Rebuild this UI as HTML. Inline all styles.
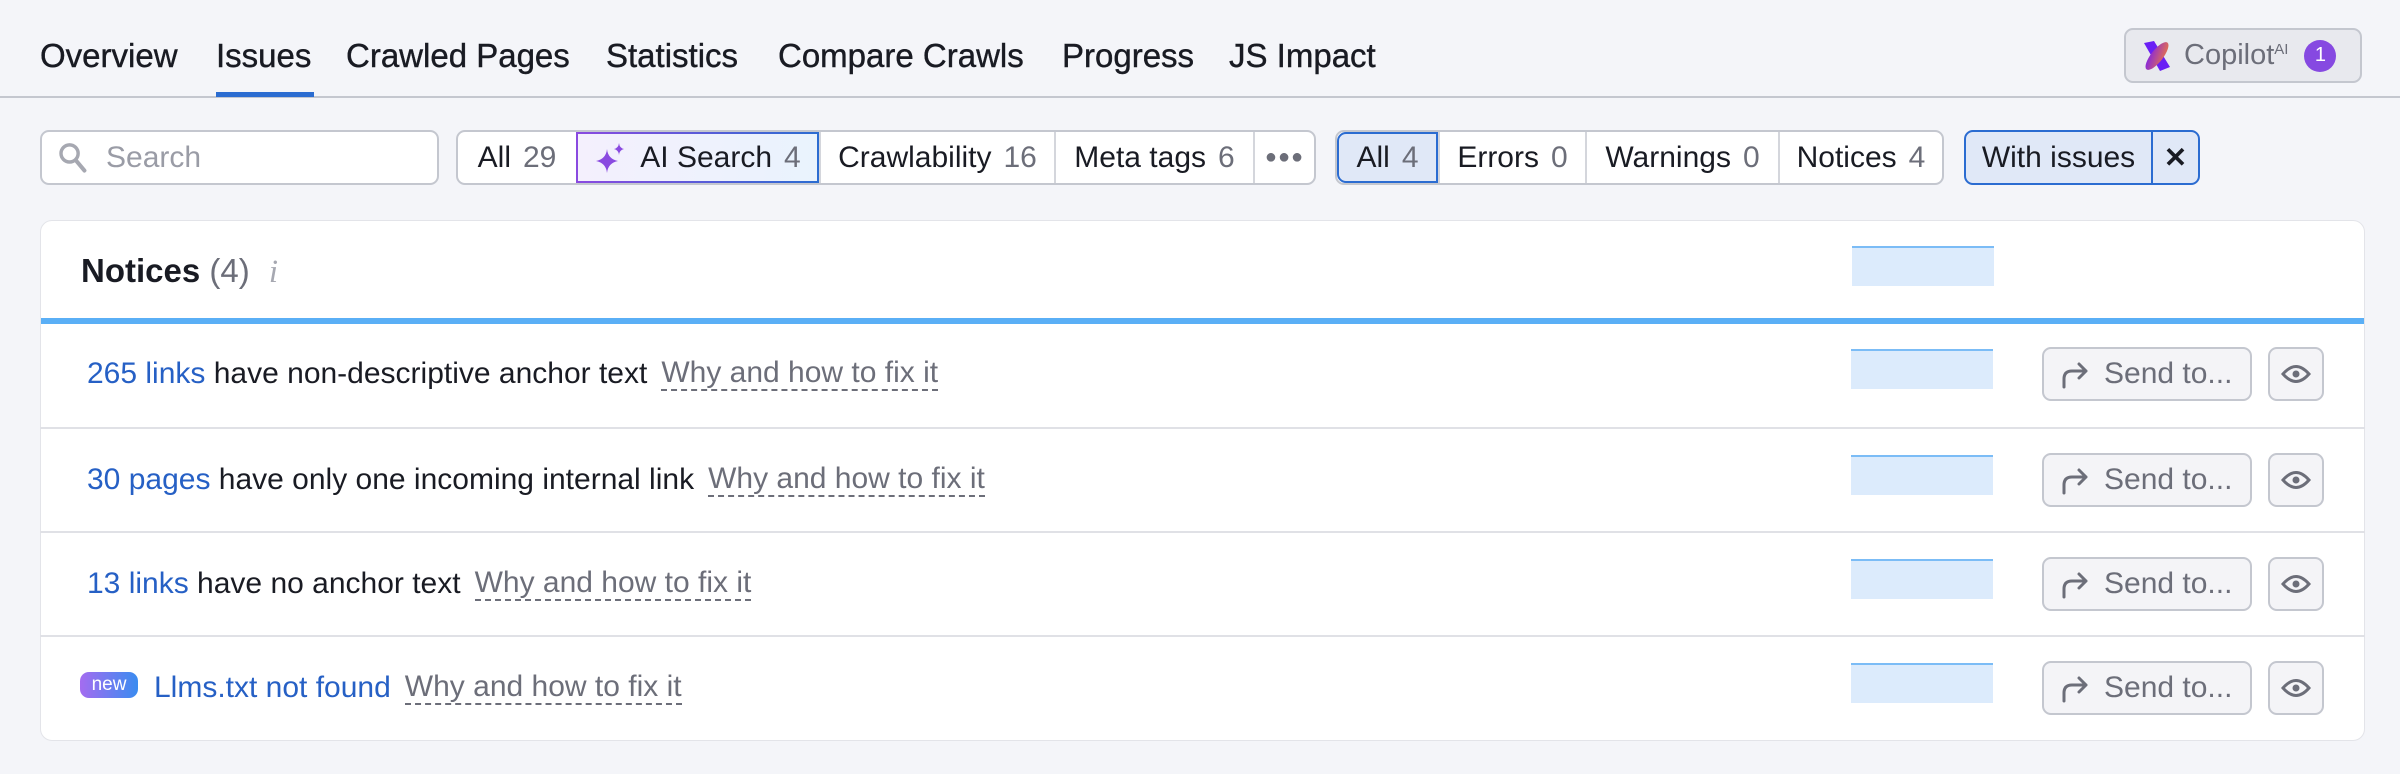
<!DOCTYPE html>
<html><head><meta charset="utf-8"><style>
*{box-sizing:border-box;margin:0;padding:0}
body{width:2400px;height:774px;background:#f4f5f9;font-family:"Liberation Sans",sans-serif;color:#191b23;position:relative;overflow:hidden}
.a{position:absolute}
.tab{position:absolute;top:36px;font-size:33px;line-height:40px;color:#191b23;white-space:nowrap;-webkit-text-stroke:0.4px #191b23}
.f{position:absolute;top:130px;height:55px;display:flex;align-items:center;font-size:30px;white-space:nowrap}
.seg{display:flex;height:55px;border:2px solid #c4c7cf;border-radius:9px;background:#fff;overflow:hidden}
.seg>div{display:flex;align-items:center;justify-content:center;border-left:2px solid #d4d6dc;height:100%}
.seg>div:first-child{border-left:none}
.n{color:#6c6e79;margin-left:12px}
.row{position:absolute;left:40px;width:2325px;height:104px;border-top:2px solid #e0e1e6}
.txt{position:absolute;left:47px;top:0;height:102px;display:flex;align-items:center;font-size:30px;white-space:nowrap}
.lk{color:#2660c5}
.why{color:#6c6e79;border-bottom:2px dashed #6c6e79;line-height:32px;margin-left:14px}
.sp{position:absolute;left:1811px;width:142px;height:40px;background:#dcebfc;border-top:2px solid #7bbcf6}
.send{position:absolute;left:2002px;width:210px;height:54px;border:2px solid #c4c7cf;border-radius:9px;background:#f4f4f7;display:flex;align-items:center;font-size:30px;color:#6c6e79}
.eye{position:absolute;left:2228px;width:56px;height:54px;border:2px solid #c4c7cf;border-radius:9px;background:#f4f4f7;display:flex;align-items:center;justify-content:center}
</style></head><body>
<div class="tab" style="left:40px">Overview</div>
<div class="tab" style="left:216px">Issues</div>
<div class="tab" style="left:346px">Crawled Pages</div>
<div class="tab" style="left:606px">Statistics</div>
<div class="tab" style="left:778px">Compare Crawls</div>
<div class="tab" style="left:1062px">Progress</div>
<div class="tab" style="left:1229px">JS Impact</div>
<div class="a" style="left:0;top:96px;width:2400px;height:2px;background:#c4c7cf"></div>
<div class="a" style="left:216px;top:92px;width:98px;height:5px;background:#2b6cd1"></div>

<div class="a" style="left:2124px;top:28px;width:238px;height:55px;border:2px solid #c4c7cf;border-radius:9px;background:#e8e9ee;display:flex;align-items:center">
<svg style="margin-left:16px" width="30" height="34" viewBox="0 0 30 34"><defs><linearGradient id="g" x1="0" y1="1" x2="1" y2="0"><stop offset="0" stop-color="#7a1cf0"/><stop offset="1" stop-color="#f07a3c"/></linearGradient></defs><path d="M2 4 L12 2 L28 28 L18 32 Z" fill="#6a1ff5"/><ellipse cx="15" cy="17" rx="6" ry="17" transform="rotate(38 15 17)" fill="url(#g)"/></svg>
<span style="font-size:29px;color:#6c6e79;margin-left:12px">Copilot<sup style="font-size:15px;vertical-align:10px">AI</sup></span>
<span style="margin-left:16px;width:32px;height:32px;border-radius:50%;background:#8649e1;color:#fff;font-size:20px;display:flex;align-items:center;justify-content:center">1</span>
</div>

<div class="f" style="left:40px;width:399px;border:2px solid #c4c7cf;border-radius:9px;background:#fff;color:#9a9ca6">
<svg style="margin-left:16px" width="30" height="32" viewBox="0 0 26 28"><circle cx="10" cy="10" r="7.5" fill="none" stroke="#a6a8b1" stroke-width="3"/><path d="M15.5 16 L23 25" stroke="#a6a8b1" stroke-width="3.5" stroke-linecap="round"/></svg>
<span style="margin-left:18px">Search</span></div>

<div class="f" style="left:456px"><div class="seg" style="width:860px">
<div style="width:118px">All<span class="n">29</span></div>
<div style="width:243px;border:2px solid;border-image:linear-gradient(90deg,#8a4ae0,#2b6cd1) 1;background:linear-gradient(90deg,#f4f0fd,#e9f3fd)"><svg width="34" height="34" viewBox="0 0 34 34" style="margin-right:12px"><path d="M13 8 Q14 18 24 20 Q14 22 13 32 Q12 22 2 20 Q12 18 13 8Z" fill="#8a4ae0"/><path d="M25 2 Q25.5 7 30 8 Q25.5 9 25 14 Q24.5 9 20 8 Q24.5 7 25 2Z" fill="#8a4ae0"/></svg>AI Search<span class="n">4</span></div>
<div style="width:235px">Crawlability<span class="n">16</span></div>
<div style="width:199px">Meta tags<span class="n">6</span></div>
<div style="flex:1;color:#6c6e79;font-size:20px;letter-spacing:1px">●●●</div>
</div></div>

<div class="f" style="left:1335px"><div class="seg" style="width:609px">
<div style="width:101px;background:#e0e8f7;border:2px solid #2b6cd1;border-radius:9px 0 0 9px">All<span class="n">4</span></div>
<div style="width:147px">Errors<span class="n">0</span></div>
<div style="width:193px">Warnings<span class="n">0</span></div>
<div style="flex:1">Notices<span class="n">4</span></div>
</div></div>

<div class="f" style="left:1964px"><div class="seg" style="width:236px;border-color:#2b6cd1;background:#e0e8f7">
<div style="width:185px">With issues</div>
<div style="flex:1;border-left:2px solid #2b6cd1;font-weight:bold;font-size:28px">✕</div>
</div></div>

<div class="a" style="left:40px;top:220px;width:2325px;height:521px;background:#fff;border:1px solid #e3e4e9;border-radius:12px;overflow:hidden">
<div class="a" style="left:40px;top:31px;font-size:33px;white-space:nowrap"><b>Notices</b> <span style="color:#6c6e79">(4)</span> <i style="color:#a6a8b1;font-family:'Liberation Serif',serif;margin-left:10px">i</i></div>
<div class="sp" style="top:25px;height:40px"></div>
<div class="a" style="left:0;top:97px;width:100%;height:6px;background:#5aaff6"></div>
</div>

<div class="row" style="top:323px;border-top:none">
<div class="txt"><span class="lk">265 links</span>&nbsp;have non-descriptive anchor text<span class="why">Why and how to fix it</span></div>
<div class="sp" style="top:26px"></div>
<div class="send" style="top:24px"><svg style="margin-left:16px" width="30" height="30" viewBox="0 0 30 30"><path d="M4 28 V20 Q4 12 12 12 H26 M19 5 L26 12 L19 19" fill="none" stroke="#6c6e79" stroke-width="3" stroke-linecap="round" stroke-linejoin="round"/></svg><span style="margin-left:14px">Send to...</span></div>
<div class="eye" style="top:24px"><svg width="30" height="22" viewBox="0 0 30 22"><path d="M2 11 Q15 -4 28 11 Q15 26 2 11Z" fill="none" stroke="#6c6e79" stroke-width="3"/><circle cx="15" cy="11" r="3.5" fill="#6c6e79"/></svg></div>
</div>
<div class="row" style="top:427px">
<div class="txt"><span class="lk">30 pages</span>&nbsp;have only one incoming internal link<span class="why">Why and how to fix it</span></div>
<div class="sp" style="top:26px"></div>
<div class="send" style="top:24px"><svg style="margin-left:16px" width="30" height="30" viewBox="0 0 30 30"><path d="M4 28 V20 Q4 12 12 12 H26 M19 5 L26 12 L19 19" fill="none" stroke="#6c6e79" stroke-width="3" stroke-linecap="round" stroke-linejoin="round"/></svg><span style="margin-left:14px">Send to...</span></div>
<div class="eye" style="top:24px"><svg width="30" height="22" viewBox="0 0 30 22"><path d="M2 11 Q15 -4 28 11 Q15 26 2 11Z" fill="none" stroke="#6c6e79" stroke-width="3"/><circle cx="15" cy="11" r="3.5" fill="#6c6e79"/></svg></div>
</div>
<div class="row" style="top:531px">
<div class="txt"><span class="lk">13 links</span>&nbsp;have no anchor text<span class="why">Why and how to fix it</span></div>
<div class="sp" style="top:26px"></div>
<div class="send" style="top:24px"><svg style="margin-left:16px" width="30" height="30" viewBox="0 0 30 30"><path d="M4 28 V20 Q4 12 12 12 H26 M19 5 L26 12 L19 19" fill="none" stroke="#6c6e79" stroke-width="3" stroke-linecap="round" stroke-linejoin="round"/></svg><span style="margin-left:14px">Send to...</span></div>
<div class="eye" style="top:24px"><svg width="30" height="22" viewBox="0 0 30 22"><path d="M2 11 Q15 -4 28 11 Q15 26 2 11Z" fill="none" stroke="#6c6e79" stroke-width="3"/><circle cx="15" cy="11" r="3.5" fill="#6c6e79"/></svg></div>
</div>
<div class="row" style="top:635px">
<div class="txt" style="left:40px"><span style="display:inline-block;width:58px;height:26px;border-radius:9px;background:linear-gradient(90deg,#a46cf0,#3a8cf0);color:#fff;font-size:19px;line-height:26px;text-align:center;margin-right:16px;margin-top:-6px">new</span><span class="lk">Llms.txt not found</span><span class="why">Why and how to fix it</span></div>
<div class="sp" style="top:26px"></div>
<div class="send" style="top:24px"><svg style="margin-left:16px" width="30" height="30" viewBox="0 0 30 30"><path d="M4 28 V20 Q4 12 12 12 H26 M19 5 L26 12 L19 19" fill="none" stroke="#6c6e79" stroke-width="3" stroke-linecap="round" stroke-linejoin="round"/></svg><span style="margin-left:14px">Send to...</span></div>
<div class="eye" style="top:24px"><svg width="30" height="22" viewBox="0 0 30 22"><path d="M2 11 Q15 -4 28 11 Q15 26 2 11Z" fill="none" stroke="#6c6e79" stroke-width="3"/><circle cx="15" cy="11" r="3.5" fill="#6c6e79"/></svg></div>
</div>
</body></html>
